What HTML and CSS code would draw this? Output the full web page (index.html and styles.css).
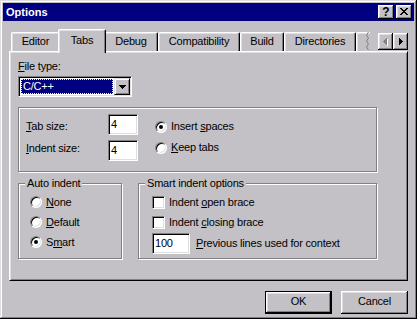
FILE: index.html
```html
<!DOCTYPE html>
<html>
<head>
<meta charset="utf-8">
<title>Options</title>
<link rel="stylesheet" href="styles.css">
</head>
<body>
<div class="window">
  <div class="titlebar">
    <span class="title">Options</span>
    <div class="tcontrols">
      <span class="tbtn help">?</span>
      <span class="tbtn close"><svg width="8" height="7" viewBox="0 0 8 7"><path fill="#000" d="M0 0h2v1H0zM6 0h2v1H6zM1 1h2v1H1zM5 1h2v1H5zM2 2h4v1H2zM3 3h2v1H3zM2 4h4v1H2zM1 5h2v1H1zM5 5h2v1H5zM0 6h2v1H0zM6 6h2v1H6z"/></svg></span>
    </div>
  </div>
  <div class="main">
    <div class="tabrow">
      <div class="tab w-editor">Editor</div>
      <div class="tab sel w-tabs">Tabs</div>
      <div class="tab w-debug">Debug</div>
      <div class="tab w-compat">Compatibility</div>
      <div class="tab w-build">Build</div>
      <div class="tab w-dirs">Directories</div>
      <div class="tab partial"><svg class="tear" width="5" height="18" viewBox="0 0 5 18"><polyline fill="none" stroke="#808080" stroke-width="1" points="3.5,0 1.5,3 3.5,6 1.5,9 3.5,12 1.5,15 3.5,18"/></svg></div>
      <div class="scroller">
        <span class="sbtn"><svg width="5" height="8" viewBox="0 0 5 8"><path fill="#fff" d="M4 1h1v7H4zM3 2h1v5H3zM2 3h1v3H2zM1 4h1v1H1z"/><path fill="#808080" d="M3 0h1v7H3zM2 1h1v5H2zM1 2h1v3H1zM0 3h1v1H0z"/></svg></span>
        <span class="sbtn"><svg width="4" height="7" viewBox="0 0 4 7"><path fill="#000" d="M0 0h1v7H0zM1 1h1v5H1zM2 2h1v3H2zM3 3h1v1H3z"/></svg></span>
      </div>
    </div>
    <div class="panel">
      <div class="lbl"><u>F</u>ile type:</div>
      <div class="combo">
        <div class="combo-sel">C/C++</div>
        <span class="combo-btn"><svg width="7" height="4" viewBox="0 0 7 4"><path fill="#000" d="M0 0h7v1H0zM1 1h5v1H1zM2 2h3v1H2zM3 3h1v1H3z"/></svg></span>
      </div>
      <div class="group g1">
        <div class="col-labels">
          <div class="lbl"><u>T</u>ab size:</div>
          <div class="lbl"><u>I</u>ndent size:</div>
        </div>
        <div class="col-edits">
          <div class="edit w-small">4</div>
          <div class="edit w-small">4</div>
        </div>
        <div class="col-radios">
          <div class="opt"><span class="radio on"></span><span>Insert <u>s</u>paces</span></div>
          <div class="opt"><span class="radio"></span><span><u>K</u>eep tabs</span></div>
        </div>
      </div>
      <div class="grow">
        <div class="group gauto">
          <div class="glabel">Auto indent</div>
          <div class="opts">
            <div class="opt"><span class="radio"></span><span><u>N</u>one</span></div>
            <div class="opt"><span class="radio"></span><span><u>D</u>efault</span></div>
            <div class="opt"><span class="radio on"></span><span>S<u>m</u>art</span></div>
          </div>
        </div>
        <div class="group gsmart">
          <div class="glabel">Smart indent options</div>
          <div class="opts checks">
            <div class="opt"><span class="check"></span><span>Indent <u>o</u>pen brace</span></div>
            <div class="opt"><span class="check"></span><span>Indent <u>c</u>losing brace</span></div>
            <div class="opt tall"><span class="edit w-num">100</span><span><u>P</u>revious lines used for context</span></div>
          </div>
        </div>
      </div>
    </div>
    <div class="actions">
      <button class="btn default">OK</button>
      <button class="btn">Cancel</button>
    </div>
  </div>
</div>
</body>
</html>
```

FILE: styles.css
```css
* { box-sizing: border-box; }
html, body { margin: 0; padding: 0; }
body {
  width: 417px;
  height: 319px;
  overflow: hidden;
  background: #c3c0c6;
  font-family: "Liberation Sans", Arial, sans-serif;
  font-size: 11px;
  line-height: 13px;
  color: #000;
  letter-spacing: -0.2px;
}
u { text-decoration: underline; text-underline-offset: 1px; }

.window {
  width: 417px;
  height: 319px;
  padding: 3px;
  background: #c3c0c6;
  box-shadow: inset -1px -1px #000, inset 1px 1px #dfdfdf, inset -2px -2px #808080, inset 2px 2px #fff;
}

.titlebar {
  height: 18px;
  background: #000080;
  display: flex;
  padding-left: 3px;
}
.title {
  color: #fff;
  font-weight: bold;
  line-height: 18px;
  letter-spacing: 0;
}
.tcontrols {
  margin-left: auto;
  margin-right: 2px;
  margin-top: 2px;
  display: flex;
  gap: 2px;
}
.tbtn {
  width: 16px;
  height: 14px;
  background: #c3c0c6;
  box-shadow: inset -1px -1px #000, inset 1px 1px #fff, inset -2px -2px #808080, inset 2px 2px #dfdfdf;
  display: flex;
  align-items: center;
  justify-content: center;
}
.help {
  font-weight: bold;
  font-size: 12px;
  line-height: 14px;
  padding-bottom: 1px;
  letter-spacing: 0;
}
.close svg { display: block; margin-bottom: 1px; }

.main { padding: 8px 6px 0; }

.tabrow {
  display: flex;
  align-items: flex-end;
  height: 22px;
  padding-left: 2px;
}
.tab {
  flex: none;
  height: 19px;
  border-top: 1px solid #fff;
  border-left: 1px solid #fff;
  border-right: 1px solid #000;
  border-radius: 2px 2px 0 0;
  box-shadow: inset -1px 0 #808080, inset 1px 1px #dfdfdf;
  text-align: center;
  padding-top: 2px;
  background: #c3c0c6;
}
.tab.sel {
  height: 24px;
  margin: 0 -2px -2px;
  padding-top: 4px;
  position: relative;
  z-index: 1;
}
.w-editor { width: 49px; }
.w-tabs { width: 48px; }
.w-debug { width: 54px; }
.w-compat { width: 82px; }
.w-build { width: 44px; }
.w-dirs { width: 72px; }
.tab.partial {
  width: 14px;
  border-right: 0;
  box-shadow: inset 1px 1px #dfdfdf;
  border-radius: 2px 0 0 0;
  display: flex;
  justify-content: flex-end;
  padding-top: 0;
}
.tear { display: block; margin-top: -1px; }

.scroller {
  margin-left: auto;
  margin-bottom: 1px;
  display: flex;
}
.sbtn {
  width: 15px;
  height: 17px;
  background: #c3c0c6;
  box-shadow: inset -1px -1px #000, inset 1px 1px #fff, inset -2px -2px #808080, inset 2px 2px #dfdfdf;
  display: flex;
  align-items: center;
  justify-content: center;
}
.sbtn svg { display: block; }

.panel {
  height: 230px;
  border: 1px solid;
  border-color: #fff #000 #000 #fff;
  box-shadow: inset 1px 1px #dfdfdf, inset -1px -1px #808080;
  padding: 8px 0 0 8px;
}
.lbl { line-height: 13px; white-space: nowrap; }

.combo {
  margin-top: 3px;
  width: 114px;
  height: 21px;
  display: flex;
  border: 1px solid;
  border-color: #808080 #fff #fff #808080;
  box-shadow: inset 1px 1px #000, inset -1px -1px #dfdfdf;
  padding: 1px;
  background: #fff;
}
.combo-sel {
  flex: 1;
  margin: 1px;
  background: #000080;
  color: #fff;
  border: 1px dotted #ffff80;
  padding-left: 1px;
  line-height: 13px;
}
.combo-btn {
  width: 16px;
  height: 17px;
  background: #c3c0c6;
  border: 1px solid;
  border-color: #dfdfdf #000 #000 #dfdfdf;
  box-shadow: inset 1px 1px #fff, inset -1px -1px #808080;
  display: flex;
  align-items: center;
  justify-content: center;
}
.combo-btn svg { display: block; }

.group {
  border: 1px solid #808080;
  box-shadow: inset 1px 1px #fff, 1px 1px #fff;
}
.g1 {
  width: 359px;
  height: 65px;
  margin-top: 10px;
  display: flex;
  align-items: flex-start;
  padding-left: 7px;
}
.col-labels {
  width: 82px;
  padding-top: 12px;
  display: flex;
  flex-direction: column;
  gap: 9px;
}
.col-edits {
  padding-top: 6px;
  display: flex;
  flex-direction: column;
  gap: 5px;
}
.col-radios {
  margin-left: 17px;
  padding-top: 8px;
  display: flex;
  flex-direction: column;
}
.col-radios .opt { height: 21px; }

.edit {
  height: 21px;
  background: #fff;
  border: 1px solid;
  border-color: #808080 #fff #fff #808080;
  box-shadow: inset 1px 1px #000, inset -1px -1px #dfdfdf;
  padding-left: 2px;
  line-height: 18px;
  display: block;
}
.w-small { width: 30px; }
.w-num { width: 38px; height: 21px; margin-right: 6px; flex: none; }

.opt {
  display: flex;
  align-items: center;
  height: 20px;
  white-space: nowrap;
}
.opt.tall { height: 22px; }

.radio {
  flex: none;
  width: 12px;
  height: 12px;
  margin-right: 4px;
  border-radius: 50%;
  background: #fff;
  border: 1px solid;
  border-color: #808080 #fff #fff #808080;
  box-shadow: inset 1px 1px #000, inset -1px -1px #dfdfdf;
  display: flex;
  align-items: center;
  justify-content: center;
}
.radio.on::after {
  content: "";
  width: 4px;
  height: 4px;
  border-radius: 50%;
  background: #000;
}
.check {
  flex: none;
  width: 13px;
  height: 13px;
  margin-right: 4px;
  background: #fff;
  border: 1px solid;
  border-color: #808080 #fff #fff #808080;
  box-shadow: inset 1px 1px #000, inset -1px -1px #dfdfdf;
}

.grow {
  display: flex;
  margin-top: 11px;
}
.gauto {
  width: 104px;
  height: 76px;
  display: flex;
  flex-direction: column;
}
.gsmart {
  width: 239px;
  height: 76px;
  margin-left: 16px;
  display: flex;
  flex-direction: column;
}
.glabel {
  align-self: flex-start;
  margin: -7px 0 0 6px;
  padding: 0 2px;
  background: #c3c0c6;
  line-height: 13px;
  white-space: nowrap;
}
.opts {
  margin-top: 2px;
  padding-left: 11px;
  display: flex;
  flex-direction: column;
}
.opts.checks { padding-left: 13px; }

.actions {
  display: flex;
  justify-content: flex-end;
  gap: 9px;
  margin-top: 10px;
}
.btn {
  appearance: none;
  margin: 0;
  border: 0;
  width: 67px;
  height: 23px;
  padding: 0 0 2px;
  font: inherit;
  letter-spacing: inherit;
  color: #000;
  background: #c3c0c6;
  box-shadow: inset -1px -1px #000, inset 1px 1px #fff, inset -2px -2px #808080, inset 2px 2px #dfdfdf;
  display: flex;
  align-items: center;
  justify-content: center;
}
.btn.default {
  border: 1px solid #000;
}
```
